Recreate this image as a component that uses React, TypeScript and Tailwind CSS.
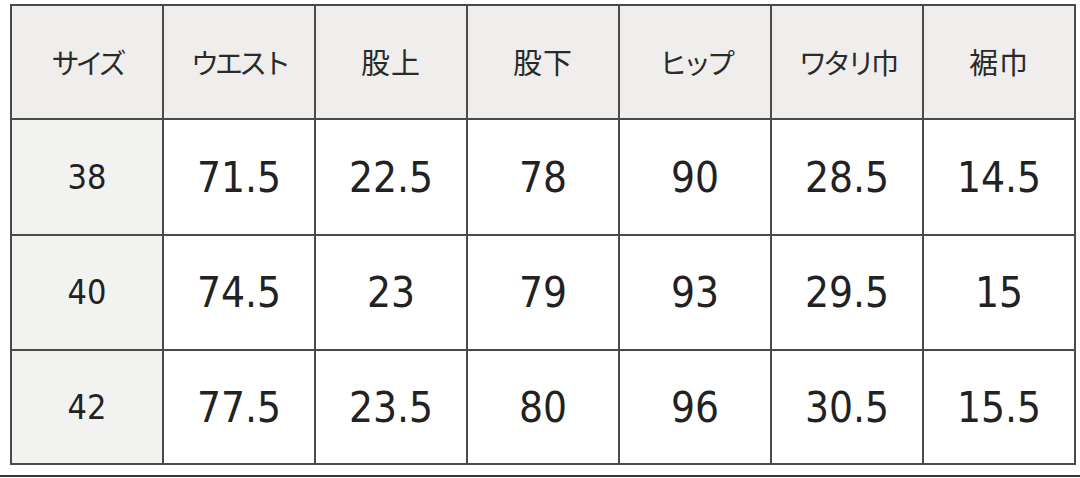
const headers = [
  { label: "サイズ", tight: true },
  { label: "ウエスト", tight: true },
  { label: "股上", tight: false },
  { label: "股下", tight: false },
  { label: "ヒップ", tight: true },
  { label: "ワタリ巾", tight: true },
  { label: "裾巾", tight: false },
];

const rows = [
  ["38", "71.5", "22.5", "78", "90", "28.5", "14.5"],
  ["40", "74.5", "23", "79", "93", "29.5", "15"],
  ["42", "77.5", "23.5", "80", "96", "30.5", "15.5"],
];

const rowHeights = ["h-[116px]", "h-[115px]", "h-[114px]"];

export default function App() {
  return (
    <div className="flex h-[478px] w-[1080px] flex-col bg-white text-[#222]">
      <table className="ml-[10px] mt-[4px] w-[1066px] table-fixed border-collapse">
        <thead>
          <tr className="h-[114px] bg-[#efeeed]">
            {headers.map((h) => (
              <th
                key={h.label}
                className={
                  h.tight
                    ? "border-2 border-[#4a4a4a] text-center text-[28px] font-normal tracking-[-4px] text-[#2a2a2a] [font-family:'Noto_Sans_CJK_JP',sans-serif]"
                    : "border-2 border-[#4a4a4a] text-center text-[29px] font-normal tracking-[1px] text-[#2a2a2a] [font-family:'Noto_Sans_CJK_JP',sans-serif]"
                }
              >
                {h.label}
              </th>
            ))}
          </tr>
        </thead>
        <tbody>
          {rows.map((row, i) => (
            <tr key={row[0]} className={rowHeights[i]}>
              {row.map((cell, j) => (
                <td
                  key={j}
                  className={
                    j === 0
                      ? "border-2 border-[#4a4a4a] bg-[#f2f2f1] text-center text-[34px] [font-family:'DejaVu_Sans_Condensed','DejaVu_Sans',sans-serif]"
                      : "border-2 border-[#4a4a4a] text-center text-[42px] [font-family:'DejaVu_Sans_Condensed','DejaVu_Sans',sans-serif]"
                  }
                >
                  {cell}
                </td>
              ))}
            </tr>
          ))}
        </tbody>
      </table>
      <div className="mt-auto mb-[1px] h-[2px] w-full bg-[#333]" />
    </div>
  );
}
